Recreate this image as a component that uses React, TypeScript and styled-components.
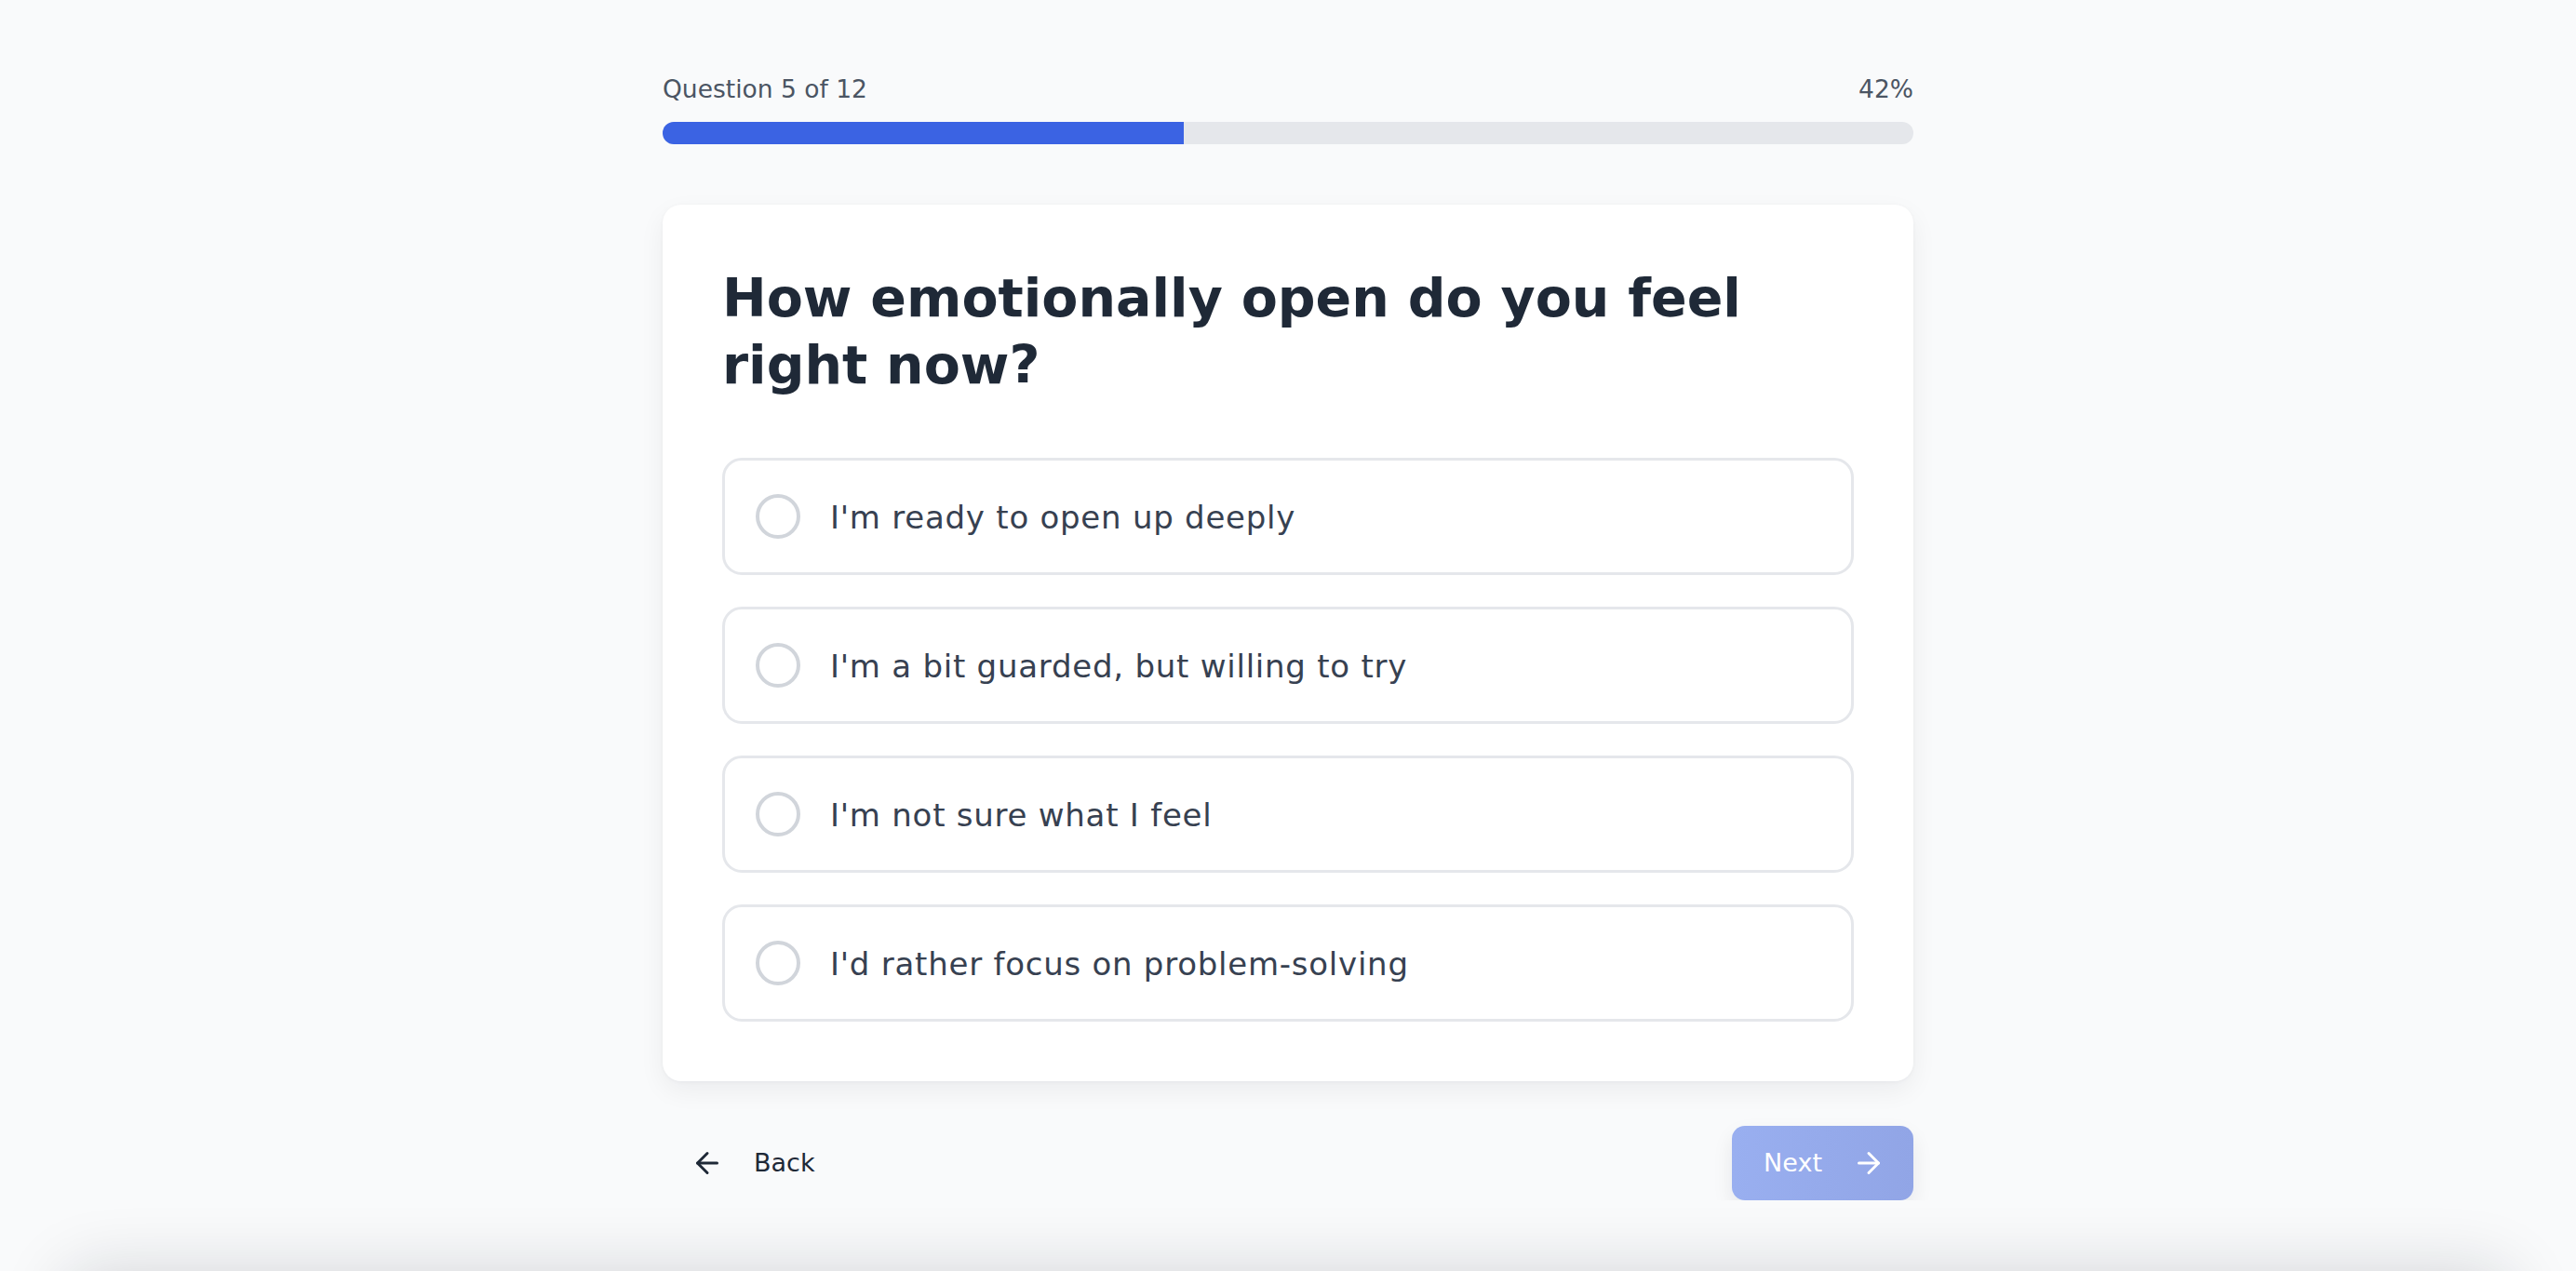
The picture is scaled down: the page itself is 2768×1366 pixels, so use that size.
import React, { useState } from "react";
import styled, { createGlobalStyle } from "styled-components";
import { ArrowLeft, ArrowRight } from "lucide-react";

const GlobalStyle = createGlobalStyle`
  html, body {
    margin: 0;
    padding: 0;
    background: #f9fafb;
    font-family: "DejaVu Sans", "Noto Sans", sans-serif;
    color: #1f2937;
  }
  * { box-sizing: border-box; }
`;

const Page = styled.main`
  width: 1344px;
  margin: 0 auto;
  padding-top: 76px;
`;

const ProgressHeader = styled.div`
  display: flex;
  justify-content: space-between;
  align-items: center;
  font-size: 26.5px;
  line-height: 40px;
  color: #4b5563;
  margin-bottom: 15px;
`;

const Track = styled.div`
  height: 24px;
  border-radius: 999px;
  background: #e5e7eb;
  overflow: hidden;
`;

const Fill = styled.div`
  height: 100%;
  background: #3b63e3;
`;

const Card = styled.section`
  margin-top: 65px;
  background: #ffffff;
  border-radius: 20px;
  padding: 64px;
  box-shadow: 0 10px 28px rgba(17, 24, 39, 0.06), 0 1px 4px rgba(17, 24, 39, 0.04);
`;

const Heading = styled.h1`
  margin: 0 0 64px;
  font-size: 57px;
  line-height: 72px;
  font-weight: 700;
  color: #1f2937;
`;

const Options = styled.div`
  display: flex;
  flex-direction: column;
  gap: 34px;
`;

const Option = styled.button<{ $selected: boolean }>`
  display: flex;
  align-items: center;
  gap: 32px;
  width: 100%;
  height: 126px;
  padding: 0 33px;
  background: ${(p) => (p.$selected ? "#eef2fd" : "#ffffff")};
  border: 3px solid ${(p) => (p.$selected ? "#3b63e3" : "#e5e7eb")};
  border-radius: 21px;
  cursor: pointer;
  font-family: inherit;
  text-align: left;
`;

const Radio = styled.span<{ $selected: boolean }>`
  flex: none;
  width: 48px;
  height: 48px;
  border-radius: 50%;
  border: 4px solid ${(p) => (p.$selected ? "#3b63e3" : "#d1d5db")};
  background: ${(p) => (p.$selected ? "radial-gradient(circle, #3b63e3 45%, transparent 47%)" : "transparent")};
`;

const OptionLabel = styled.span`
  font-size: 34px;
  line-height: 50px;
  letter-spacing: 0.75px;
  color: #374151;
  padding-top: 2px;
`;

const Footer = styled.div`
  display: flex;
  justify-content: space-between;
  align-items: center;
  margin-top: 48px;
`;

const NavButton = styled.button<{ $primary?: boolean; $disabled?: boolean }>`
  display: flex;
  align-items: center;
  gap: 32px;
  height: 80px;
  padding: ${(p) => (p.$primary ? "0 30px 0 34px" : "0 30px")};
  border: none;
  border-radius: 14px;
  font-family: inherit;
  font-size: 27px;
  line-height: 40px;
  cursor: pointer;
  color: ${(p) => (p.$primary ? "#ffffff" : "#1f2937")};
  background: ${(p) =>
    p.$primary
      ? p.$disabled
        ? "linear-gradient(90deg, #99aff0 0%, #91a5e6 100%)"
        : "linear-gradient(90deg, #3b63e3 0%, #2f4fd0 100%)"
      : "transparent"};
  box-shadow: ${(p) => (p.$primary ? "0 10px 22px rgba(17, 24, 39, 0.08)" : "none")};
`;

const BottomShade = styled.div`
  position: fixed;
  left: 70px;
  right: 70px;
  top: 100%;
  height: 120px;
  border-radius: 28px;
  box-shadow: 0 0 72px rgba(17, 24, 39, 0.16);
  pointer-events: none;
`;

const options = [
  "I'm ready to open up deeply",
  "I'm a bit guarded, but willing to try",
  "I'm not sure what I feel",
  "I'd rather focus on problem-solving",
];

export default function App() {
  const [selected, setSelected] = useState<number | null>(null);
  const current = 5;
  const total = 12;
  const percent = Math.round((current / total) * 100);
  return (
    <>
      <GlobalStyle />
      <Page>
        <ProgressHeader>
          <span>
            Question {current} of {total}
          </span>
          <span>{percent}%</span>
        </ProgressHeader>
        <Track>
          <Fill style={{ width: `${(current / total) * 100}%` }} />
        </Track>
        <Card>
          <Heading>How emotionally open do you feel right now?</Heading>
          <Options>
            {options.map((o, i) => (
              <Option key={o} $selected={selected === i} onClick={() => setSelected(i)}>
                <Radio $selected={selected === i} />
                <OptionLabel>{o}</OptionLabel>
              </Option>
            ))}
          </Options>
        </Card>
        <Footer>
          <NavButton>
            <ArrowLeft size={36} strokeWidth={2} />
            <span>Back</span>
          </NavButton>
          <NavButton $primary $disabled={selected === null}>
            <span>Next</span>
            <ArrowRight size={36} strokeWidth={2} />
          </NavButton>
        </Footer>
      </Page>
      <BottomShade />
    </>
  );
}
